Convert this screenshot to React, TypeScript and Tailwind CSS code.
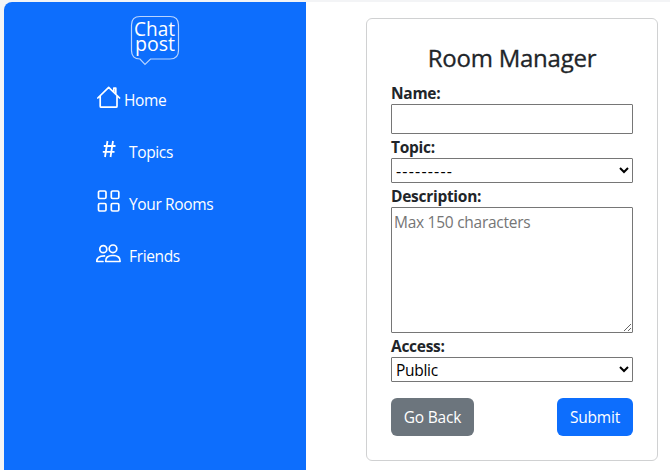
import React from "react";

const stroke = {
  fill: "none",
  stroke: "#fff",
  strokeWidth: 1.7,
  strokeLinecap: "round",
  strokeLinejoin: "round",
} as const;

function Logo() {
  return (
    <svg className="block" width="50" height="52" viewBox="0 0 50 52">
      <path
        d="M10 1.500H40Q48.500 1.500 48.500 10V35.500Q48.500 44 40 44H20.500L15 49.500 10 44Q1.500 44 1.500 35.500V10Q1.500 1.500 10 1.500Z"
        fill="none"
        stroke="#b8d4ff"
        strokeWidth="1.2"
      />
      <text fill="#fff" fontSize="20" fontFamily="Open Sans, sans-serif">
        <tspan x="4" y="20.500" textLength="41" lengthAdjust="spacingAndGlyphs">Chat</tspan>
        <tspan x="5" y="36" textLength="40" lengthAdjust="spacingAndGlyphs">post</tspan>
      </text>
    </svg>
  );
}

function HomeIcon() {
  return (
    <svg width="24" height="24" viewBox="0 0 24 24" {...stroke}>
      <path d="M.8 13 11.700 2.300 22.600 13M3.200 11V21.200Q3.200 22.200 4.200 22.200H19Q20 22.200 20 21.200V11M16.800 7V3.200H18.800V9" />
    </svg>
  );
}

function HashIcon() {
  return (
    <svg width="24" height="24" viewBox="0 0 24 24" {...stroke} strokeWidth={1.8} strokeLinecap="butt">
      <path d="M10.500 4 8 20M16 4 13.500 20M6.800 9H18.500M5.800 14.800H17.500" />
    </svg>
  );
}

function GridIcon() {
  return (
    <svg width="24" height="24" viewBox="0 0 24 24" {...stroke}>
      <rect x="1.500" y="2" width="7.500" height="7.500" rx="1.300" />
      <rect x="14.300" y="2" width="7.500" height="7.500" rx="1.300" />
      <rect x="1.500" y="14.500" width="7.500" height="7.500" rx="1.300" />
      <rect x="14.300" y="14.500" width="7.500" height="7.500" rx="1.300" />
    </svg>
  );
}

function FriendsIcon() {
  return (
    <svg className="-ml-px overflow-visible" width="25" height="24" viewBox="0 0 25 24" {...stroke}>
      <circle cx="17" cy="7.800" r="3.800" />
      <circle cx="7.300" cy="8.200" r="3.500" />
      <path d="M9.700 20.500Q9.300 14.500 16.900 14.500T24.100 20.500ZM7 20.500H.8Q.5 15 8.500 14.900" />
    </svg>
  );
}

const items = [
  { label: "Home", icon: <HomeIcon />, text: "ml-[3px] w-[43px]" },
  { label: "Topics", icon: <HashIcon />, text: "ml-2 w-[44px]" },
  { label: "Your Rooms", icon: <GridIcon />, text: "ml-2 w-[84px]" },
  { label: "Friends", icon: <FriendsIcon />, text: "ml-2 w-[51px]" },
];

function Label({ children }: { children: React.ReactNode }) {
  return <label className="block h-6 whitespace-nowrap text-[15.500px] leading-[26px] font-bold tracking-[-0.28px]">{children}</label>;
}

export default function App() {
  return (
    <div className="flex h-[470px] w-[670px] overflow-hidden bg-[#f3f4f6] pt-[2px] pl-1 font-['Open_Sans','Noto_Sans',sans-serif] text-base text-[#212529]">
      <div className="flex flex-1 overflow-hidden rounded-tl-lg bg-white">
        <aside className="w-[302px] shrink-0 bg-[#0d6efd] pt-[13px] text-white">
          <div className="flex justify-center">
            <Logo />
          </div>
          <nav className="mt-[18px] pl-[93px]">
            {items.map((item) => (
              <a key={item.label} className="mb-7 flex h-6 items-start">
                {item.icon}
                <span className={`${item.text} mt-[3px] text-[15.500px] leading-6 tracking-[-0.35px] whitespace-nowrap`}>{item.label}</span>
              </a>
            ))}
          </nav>
        </aside>
        <main className="pt-4 pl-[60px]">
          <form className="h-[443px] w-[292px] rounded-md border border-[#d0d1d2] px-6 pt-6">
            <h1 className="mb-[7px] text-center text-[24px] leading-[30px] font-medium tracking-[-0.25px] whitespace-nowrap [-webkit-text-stroke:0.3px_#212529]">Room Manager</h1>
            <Label>Name:</Label>
            <input className="block h-[30px] w-full rounded-[1px] border border-[#767676] px-0.5" />
            <Label>Topic:</Label>
            <select className="block h-[25px] w-full rounded-[1px] border border-[#767676] bg-white text-base tracking-[1.2px] text-black">
              <option>---------</option>
            </select>
            <Label>Description:</Label>
            <textarea placeholder="Max 150 characters" className="block h-[126px] w-full rounded-[1px] border border-[#767676] p-0.5 text-[15.500px] leading-[25px] tracking-[-0.27px] placeholder:text-[#757575]" />
            <Label>Access:</Label>
            <select className="block h-[25px] w-full rounded-[1px] border border-[#767676] bg-white text-[15.500px] tracking-[-0.3px] text-black">
              <option>Public</option>
            </select>
            <div className="mt-4 flex justify-between text-[15.500px] tracking-[-0.2px] text-white">
              <button type="button" className="h-[38px] w-[83px] rounded-md bg-[#6c757d] pt-0.5 whitespace-nowrap">Go Back</button>
              <button type="button" className="h-[38px] w-[76px] rounded-md bg-[#0d6efd] pt-0.5">Submit</button>
            </div>
          </form>
        </main>
      </div>
    </div>
  );
}
